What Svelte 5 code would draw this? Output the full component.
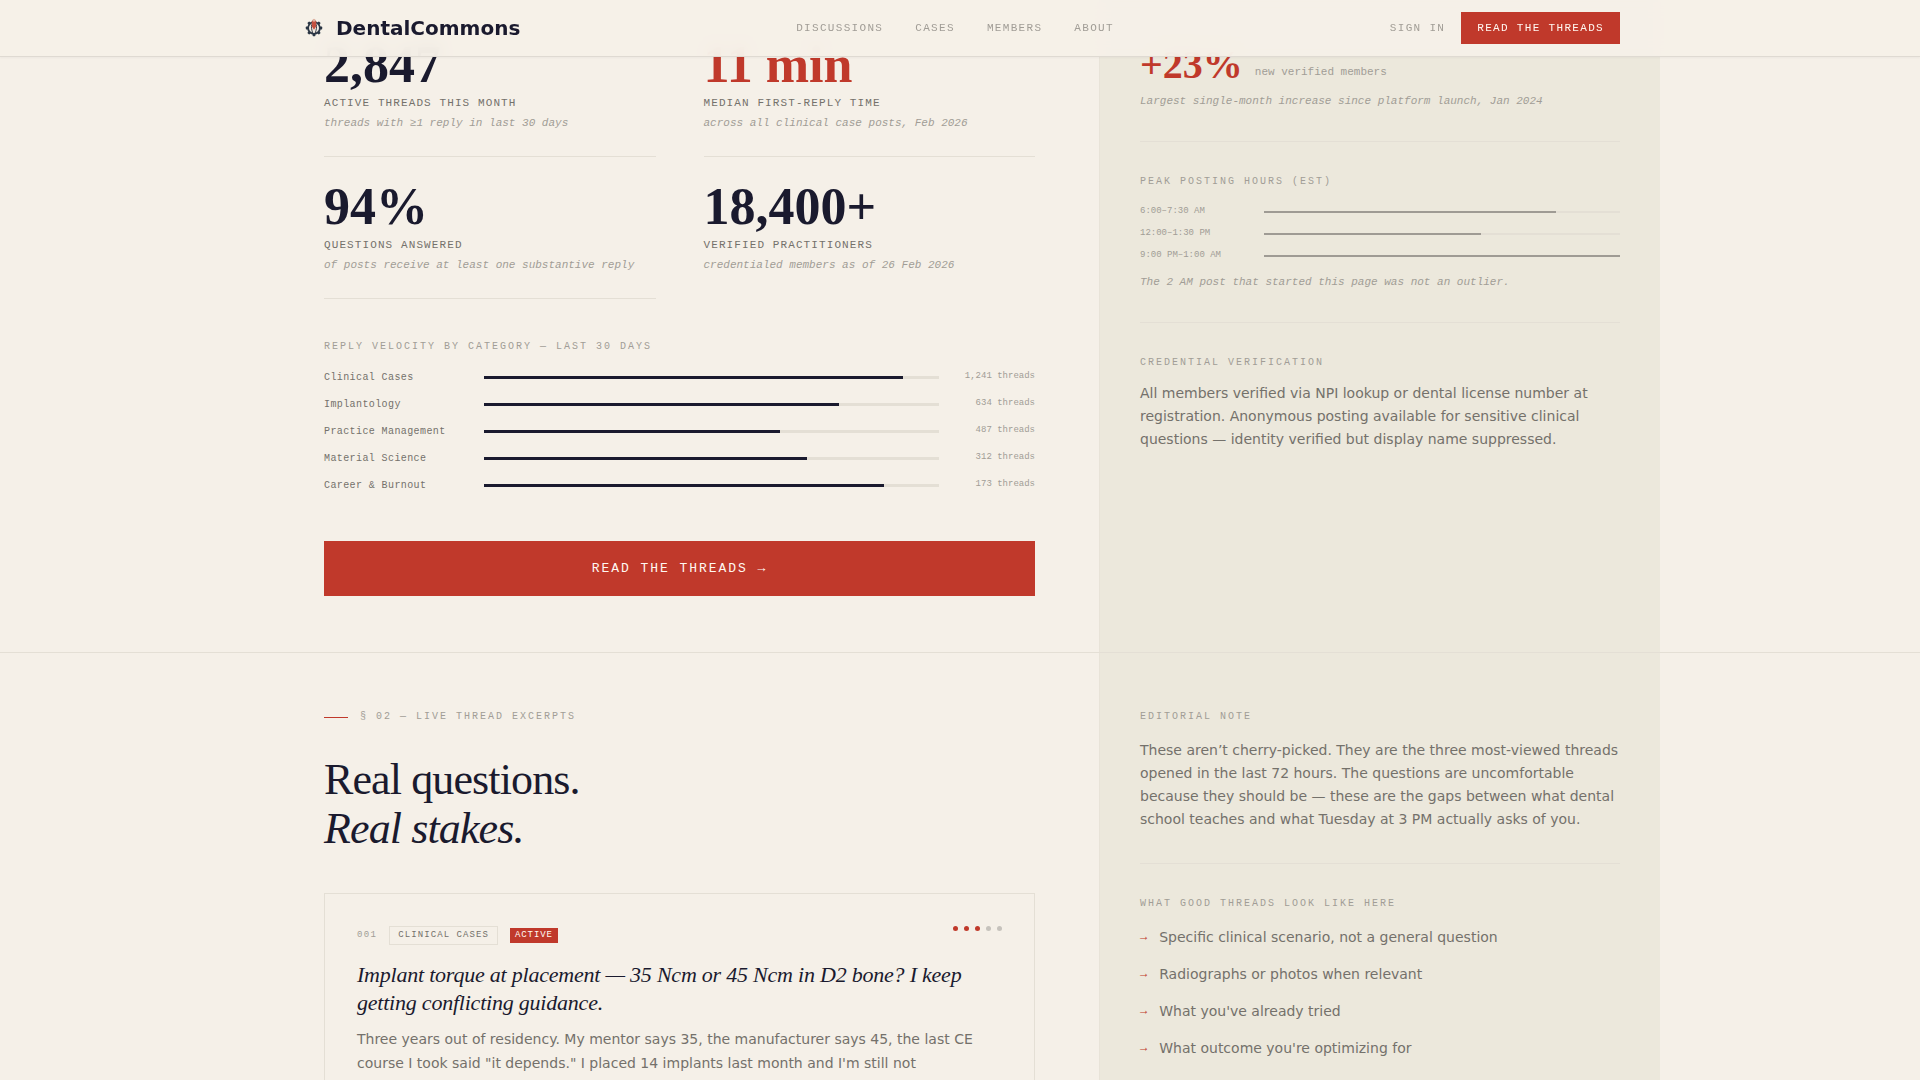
<script>
  const navLinks = ['Discussions', 'Cases', 'Members', 'About'];

  const stats = [
    { value: '2,847', label: 'Active threads this month', note: 'threads with ≥1 reply in last 30 days' },
    { value: '11 min', label: 'Median first-reply time', note: 'across all clinical case posts, Feb 2026', accent: true },
    { value: '94%', label: 'Questions answered', note: 'of posts receive at least one substantive reply' },
    { value: '18,400+', label: 'Verified practitioners', note: 'credentialed members as of 26 Feb 2026' }
  ];

  const categories = [
    { name: 'Clinical Cases', share: 92, threads: '1,241' },
    { name: 'Implantology', share: 78, threads: '634' },
    { name: 'Practice Management', share: 65, threads: '487' },
    { name: 'Material Science', share: 71, threads: '312' },
    { name: 'Career & Burnout', share: 88, threads: '173' }
  ];

  const hours = [
    { range: '6:00–7:30 AM', share: 82 },
    { range: '12:00–1:30 PM', share: 61 },
    { range: '9:00 PM–1:00 AM', share: 100 }
  ];

  const goodThreads = [
    'Specific clinical scenario, not a general question',
    'Radiographs or photos when relevant',
    "What you've already tried",
    "What outcome you're optimizing for"
  ];

  const heat = [true, true, true, false, false];
  const teeth = [0, 45, 90, 135, 180, 225, 270, 315];
</script>

<div class="page">
  <header class="topbar">
    <div class="topbar-inner">
      <a class="brand" href="#home">
        <svg class="mark" viewBox="0 0 28 28" aria-hidden="true">
          <g fill="#2b3644">
            {#each teeth as angle}
              <rect x="12.6" y="5.8" width="2.8" height="2.8" rx="0.6" transform="rotate({angle} 14 14)" />
            {/each}
          </g>
          <circle cx="14" cy="14" r="5.9" fill="#f1ebe2" stroke="#2b3644" stroke-width="1.8" />
          <path d="M11.7 10.400c-.6 3 .1 5.800 1 8.600M16.300 10.400c.6 3-.1 5.800-1 8.600" fill="none" stroke="#3a3f49" stroke-width="1" />
          <path d="M14 5.200l2.300 2.400-.2 5-2.100 3.200-2.100-3.200-.2-5z" fill="#c4503f" />
          <circle cx="14" cy="6.300" r="1.500" fill="#e0b3a2" />
        </svg>
        <span>DentalCommons</span>
      </a>
      <nav class="links" aria-label="Main">
        {#each navLinks as link}
          <a href="#{link.toLowerCase()}">{link}</a>
        {/each}
      </nav>
      <div class="actions">
        <a href="#sign-in">Sign in</a>
        <button class="cta-small" type="button">Read the threads</button>
      </div>
    </div>
  </header>

  <main>
    <section class="band">
      <div class="columns">
        <div class="primary first">
          <div class="stats">
            {#each stats as stat}
              <div class="stat">
                <div class="value" class:accent={stat.accent}>{stat.value}</div>
                <div class="stat-label">{stat.label}</div>
                <div class="stat-note">{stat.note}</div>
              </div>
            {/each}
          </div>

          <h3 class="kicker velocity-title">Reply velocity by category — last 30 days</h3>
          <div class="velocity">
            {#each categories as category}
              <div class="velocity-row">
                <span class="category">{category.name}</span>
                <div class="track"><div class="fill" style="width: {category.share}%"></div></div>
                <span class="count">{category.threads} threads</span>
              </div>
            {/each}
          </div>

          <button class="cta" type="button">Read the threads →</button>
        </div>

        <aside class="side first">
          <div class="block">
            <div class="growth">
              <strong>+23%</strong>
              <span>new verified members</span>
            </div>
            <p class="remark growth-note">Largest single-month increase since platform launch, Jan 2024</p>
          </div>
          <div class="block">
            <h3 class="kicker">Peak posting hours (EST)</h3>
            <div class="hours">
              {#each hours as hour}
                <div class="hour-row">
                  <span>{hour.range}</span>
                  <div class="track thin"><div class="fill" style="width: {hour.share}%"></div></div>
                </div>
              {/each}
            </div>
            <p class="remark hours-note">The 2 AM post that started this page was not an outlier.</p>
          </div>
          <div class="block">
            <h3 class="kicker">Credential verification</h3>
            <p class="prose tight">All members verified via NPI lookup or dental license number at registration. Anonymous posting available for sensitive clinical questions — identity verified but display name suppressed.</p>
          </div>
        </aside>
      </div>
    </section>

    <section class="band">
      <div class="columns">
        <div class="primary">
          <div class="kicker eyebrow">§ 02 — Live thread excerpts</div>
          <h2>Real questions.<br /><em>Real stakes.</em></h2>

          <article class="card">
            <div class="card-head">
              <div class="tags">
                <span class="number">001</span>
                <span class="tag">Clinical cases</span>
                <span class="status">Active</span>
              </div>
              <div class="heat" role="img" aria-label="Activity 3 of 5">
                {#each heat as on}
                  <i class:on></i>
                {/each}
              </div>
            </div>
            <h4>Implant torque at placement — 35 Ncm or 45 Ncm in D2 bone? I keep getting conflicting guidance.</h4>
            <p>Three years out of residency. My mentor says 35, the manufacturer says 45, the last CE course I took said "it depends." I placed 14 implants last month and I'm still not</p>
          </article>
        </div>

        <aside class="side">
          <div class="block">
            <h3 class="kicker">Editorial note</h3>
            <p class="prose">These aren’t cherry-picked. They are the three most-viewed threads opened in the last 72 hours. The questions are uncomfortable because they should be — these are the gaps between what dental school teaches and what Tuesday at 3 PM actually asks of you.</p>
          </div>
          <div class="block">
            <h3 class="kicker">What good threads look like here</h3>
            <ul>
              {#each goodThreads as item}
                <li><span class="arrow" aria-hidden="true">→</span><span>{item}</span></li>
              {/each}
            </ul>
          </div>
        </aside>
      </div>
    </section>
  </main>
</div>

<style>
  :global(body) {
    background: #f5f0e8;
  }

  .page {
    --ink: #1a1a2e;
    --text: #74716b;
    --muted: #a19d96;
    --line: #e4dfd5;
    --paper: #f5f0e8;
    --panel: #ece8dc;
    --red: #c0392b;
    --mono: 'Liberation Mono', monospace;
    --serif: 'Liberation Serif', serif;
    height: 100vh;
    overflow-y: auto;
    scrollbar-width: none;
    background: var(--paper);
    color: var(--ink);
    font-family: 'DejaVu Sans', sans-serif;
  }

  h2, h3, h4, p, ul {
    margin: 0;
    padding: 0;
    font-weight: 400;
  }

  a {
    color: inherit;
    text-decoration: none;
  }

  button {
    border: 0;
    margin: 0;
    color: #fff8f2;
    background: var(--red);
    font-family: var(--mono);
    text-transform: uppercase;
    cursor: pointer;
  }

  .topbar {
    position: fixed;
    inset: 0 0 auto;
    z-index: 10;
    background: rgba(245, 240, 232, 0.95);
    backdrop-filter: blur(8px);
    border-bottom: 1px solid #dfdad2;
    box-shadow: 0 1px 2px rgba(26, 26, 46, 0.04);
  }

  .topbar-inner {
    box-sizing: border-box;
    max-width: 1400px;
    height: 56px;
    margin: 0 auto;
    padding: 0 40px;
    display: flex;
    align-items: center;
    justify-content: space-between;
  }

  .brand {
    display: flex;
    align-items: center;
    gap: 8px;
    font-size: 20px;
    font-weight: 700;
  }

  .mark {
    width: 28px;
    height: 28px;
  }

  .links,
  .actions {
    display: flex;
    align-items: center;
    color: var(--muted);
    font-family: var(--mono);
    font-size: 11px;
    letter-spacing: 0.12em;
    text-transform: uppercase;
  }

  .links {
    gap: 32px;
  }

  .actions {
    gap: 16px;
  }

  .cta-small {
    height: 32px;
    padding: 0 16px;
    font-size: 11px;
    letter-spacing: 0.12em;
  }

  .band {
    border-bottom: 1px solid var(--line);
  }

  .columns {
    max-width: 1400px;
    margin: 0 auto;
    display: grid;
    grid-template-columns: minmax(0, 839fr) minmax(0, 561fr);
  }

  .primary {
    padding: 56px 64px;
  }

  .primary.first {
    padding-top: 15px;
  }

  .side {
    padding: 56px 40px;
    background: var(--panel);
    border-left: 1px solid #e8e3d8;
  }

  .side.first {
    padding-top: 45px;
  }

  .kicker {
    color: var(--muted);
    font-family: var(--mono);
    font-size: 10px;
    line-height: 16px;
    letter-spacing: 0.2em;
    text-transform: uppercase;
  }

  .stats {
    display: grid;
    grid-template-columns: 1fr 1fr;
    column-gap: 48px;
  }

  .stat {
    padding: 24px 0;
    border-bottom: 1px solid var(--line);
  }

  .stat:last-child {
    border-bottom-color: transparent;
  }

  .value {
    font-family: var(--serif);
    font-size: 52px;
    font-weight: 700;
    line-height: 52px;
  }

  .value.accent {
    color: var(--red);
  }

  .stat-label {
    margin-top: 4px;
    color: var(--text);
    font-family: var(--mono);
    font-size: 11px;
    line-height: 16px;
    letter-spacing: 0.1em;
    text-transform: uppercase;
  }

  .stat-note {
    margin-top: 4px;
    color: var(--muted);
    font-family: var(--mono);
    font-size: 11px;
    font-style: italic;
    line-height: 17px;
  }

  .velocity-title {
    margin-top: 40px;
  }

  .velocity {
    display: grid;
    gap: 10px;
    margin-top: 14px;
    font-family: var(--mono);
  }

  .velocity-row {
    display: grid;
    grid-template-columns: 144px 1fr 80px;
    column-gap: 16px;
    align-items: center;
    height: 17px;
  }

  .category {
    color: var(--text);
    font-size: 10px;
    line-height: 17px;
    letter-spacing: 0.04em;
  }

  .count {
    align-self: start;
    color: var(--muted);
    font-size: 9px;
    line-height: 14px;
    text-align: right;
  }

  .track {
    height: 3px;
    background: var(--line);
  }

  .fill {
    height: 100%;
    background: var(--ink);
  }

  .track.thin {
    height: 2px;
  }

  .track.thin .fill {
    background: #9f9b94;
  }

  .cta {
    display: block;
    width: 100%;
    margin-top: 47px;
    padding: 20px;
    font-size: 13px;
    line-height: 15px;
    letter-spacing: 0.15em;
  }

  .block + .block {
    margin-top: 32px;
    padding-top: 32px;
    border-top: 1px solid var(--line);
  }

  .growth {
    display: flex;
    align-items: flex-end;
    gap: 12px;
    color: var(--muted);
    font-family: var(--mono);
    font-size: 11px;
    line-height: 26px;
  }

  .growth strong {
    color: var(--red);
    font-family: var(--serif);
    font-size: 40px;
    line-height: 40px;
  }

  .remark {
    color: var(--muted);
    font-family: var(--mono);
    font-size: 11px;
    font-style: italic;
    line-height: 16px;
  }

  .growth-note {
    margin-top: 8px;
  }

  .hours-note {
    margin-top: 10px;
  }

  .hours {
    display: grid;
    gap: 6px;
    margin-top: 14px;
  }

  .hour-row {
    display: grid;
    grid-template-columns: 112px 1fr;
    column-gap: 12px;
    align-items: center;
    height: 16px;
    color: var(--muted);
    font-family: var(--mono);
    font-size: 9px;
    line-height: 14px;
  }

  .hour-row span {
    align-self: start;
  }

  .prose {
    margin-top: 14px;
    color: var(--text);
    font-size: 14px;
    line-height: 23px;
  }

  .prose.tight {
    margin-top: 11px;
  }

  .eyebrow {
    display: flex;
    align-items: center;
    gap: 12px;
  }

  .eyebrow::before {
    content: '';
    width: 24px;
    height: 1px;
    background: var(--red);
  }

  h2 {
    margin-top: 30px;
    font-family: var(--serif);
    font-size: 44px;
    line-height: 49px;
    letter-spacing: -0.02em;
  }

  .card {
    margin-top: 40px;
    padding: 32px;
    border: 1px solid var(--line);
  }

  .card-head {
    display: flex;
    align-items: flex-start;
    justify-content: space-between;
  }

  .tags {
    display: flex;
    align-items: center;
    gap: 12px;
    font-family: var(--mono);
    font-size: 9px;
    line-height: 13px;
    text-transform: uppercase;
  }

  .number {
    color: var(--muted);
    letter-spacing: 0.15em;
  }

  .tag {
    padding: 2px 8px;
    border: 1px solid var(--line);
    color: var(--text);
    letter-spacing: 0.12em;
  }

  .status {
    padding: 1px 5px;
    background: var(--red);
    color: #fff8f2;
    letter-spacing: 0.1em;
  }

  .heat {
    display: flex;
    gap: 6px;
  }

  .heat i {
    width: 5px;
    height: 5px;
    border-radius: 50%;
    background: #c6c2bc;
  }

  .heat i.on {
    background: var(--red);
  }

  h4 {
    margin-top: 16px;
    font-family: var(--serif);
    font-size: 22px;
    font-style: italic;
    line-height: 28px;
    letter-spacing: -0.01em;
  }

  .card p {
    margin-top: 10px;
    color: var(--text);
    font-size: 14px;
    line-height: 24px;
  }

  ul {
    display: grid;
    gap: 14px;
    margin-top: 14px;
    list-style: none;
  }

  li {
    display: flex;
    align-items: flex-start;
    gap: 12px;
    color: var(--text);
    font-size: 14px;
    line-height: 23px;
  }

  .arrow {
    color: var(--red);
    font-family: var(--mono);
    font-size: 12px;
  }
</style>
